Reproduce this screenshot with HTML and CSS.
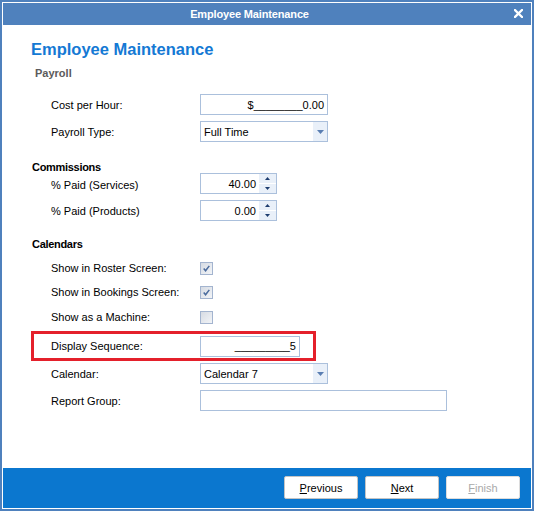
FILE: index.html
```html
<!DOCTYPE html>
<html>
<head>
<meta charset="utf-8">
<link rel="stylesheet" href="styles.css">
</head>
<body>
<div class="window">
  <div class="titlebar">
    <div class="title">Employee Maintenance</div>
    <div class="close">
      <svg viewBox="0 0 9 9"><path d="M1 1 L8 8 M8 1 L1 8" stroke="#fff" stroke-width="2.3" stroke-linecap="square"/></svg>
    </div>
  </div>
  <div class="content">
    <div class="h1">Employee Maintenance</div>
    <div class="subhead">Payroll</div>

    <div class="row m11">
      <div class="label">Cost per Hour:</div>
      <div class="field w128"><div class="value">$________0.00</div></div>
    </div>
    <div class="row m6">
      <div class="label">Payroll Type:</div>
      <div class="field w128">
        <div class="sel-text">Full Time</div>
        <div class="sel-btn"><svg viewBox="0 0 7 4" class="tri"><polygon points="0,0 7,0 3.5,4" fill="#5a7eb2"/></svg></div>
      </div>
    </div>

    <div class="section m19">Commissions</div>
    <div class="row">
      <div class="label low">% Paid (Services)</div>
      <div class="field w77">
        <div class="value">40.00</div>
        <div class="spin">
          <span class="up"><svg viewBox="0 0 5 3"><polygon points="2.5,0 5,3 0,3" fill="#1d3c6e"/></svg></span>
          <span class="down"><svg viewBox="0 0 5 3"><polygon points="0,0 5,0 2.5,3" fill="#1d3c6e"/></svg></span>
        </div>
      </div>
    </div>
    <div class="row m6">
      <div class="label">% Paid (Products)</div>
      <div class="field w77">
        <div class="value">0.00</div>
        <div class="spin">
          <span class="up"><svg viewBox="0 0 5 3"><polygon points="2.5,0 5,3 0,3" fill="#1d3c6e"/></svg></span>
          <span class="down"><svg viewBox="0 0 5 3"><polygon points="0,0 5,0 2.5,3" fill="#1d3c6e"/></svg></span>
        </div>
      </div>
    </div>

    <div class="section m17">Calendars</div>
    <div class="row crow m8">
      <div class="label">Show in Roster Screen:</div>
      <div class="check"><svg viewBox="0 0 13 13"><path d="M3.2 6.6 L5.4 9.2 L9.8 3.4" stroke="#4a6b9d" stroke-width="1.8" fill="none"/></svg></div>
    </div>
    <div class="row crow m4">
      <div class="label">Show in Bookings Screen:</div>
      <div class="check"><svg viewBox="0 0 13 13"><path d="M3.2 6.6 L5.4 9.2 L9.8 3.4" stroke="#4a6b9d" stroke-width="1.8" fill="none"/></svg></div>
    </div>
    <div class="row crow m5">
      <div class="label">Show as a Machine:</div>
      <div class="check"></div>
    </div>

    <div class="highlight m4">
      <div class="label">Display Sequence:</div>
      <div class="field w100"><div class="value">_________5</div></div>
    </div>

    <div class="row m2">
      <div class="label">Calendar:</div>
      <div class="field w128">
        <div class="sel-text">Calendar 7</div>
        <div class="sel-btn"><svg viewBox="0 0 7 4" class="tri"><polygon points="0,0 7,0 3.5,4" fill="#5a7eb2"/></svg></div>
      </div>
    </div>
    <div class="row m6">
      <div class="label">Report Group:</div>
      <div class="field w247"></div>
    </div>
  </div>
  <div class="footer">
    <button class="btn"><span><u>P</u>revious</span></button>
    <button class="btn"><span><u>N</u>ext</span></button>
    <button class="btn disabled"><span><u>F</u>inish</span></button>
  </div>
</div>
</body>
</html>
```

FILE: styles.css
```css
* { box-sizing: border-box; }
html, body { margin: 0; padding: 0; background: #fff; }
body {
  font-family: "Liberation Sans", Arial, sans-serif;
  font-size: 11px;
  color: #000;
}
.window {
  width: 534px;
  height: 511px;
  border: 2px solid #4f81bd;
  padding: 1px;
  display: flex;
  flex-direction: column;
  background: #fff;
}
.titlebar {
  height: 22px;
  flex: none;
  background: #4f81bd;
  display: flex;
  align-items: center;
  color: #fff;
}
.title {
  flex: 1;
  text-align: center;
  font-weight: bold;
  font-size: 11px;
  letter-spacing: -0.15px;
}
.close {
  width: 35px;
  display: flex;
  justify-content: flex-end;
  padding-right: 8px;
  margin-top: -1px;
}
.close svg { display: block; width: 9px; height: 9px; }

.content {
  flex: 1;
  display: flex;
  flex-direction: column;
}
.h1 {
  margin: 14px 0 0 28px;
  height: 20px;
  line-height: 20px;
  font-size: 16.5px;
  font-weight: bold;
  color: #1479d4;
}
.subhead {
  margin: 4px 0 0 32px;
  height: 20px;
  line-height: 20px;
  font-weight: bold;
  color: #5b5b5b;
}
.section {
  margin-left: 29px;
  height: 12px;
  line-height: 12px;
  font-weight: bold;
  letter-spacing: -0.3px;
}
.row {
  display: flex;
  align-items: center;
  padding-left: 48px;
  height: 21px;
}
.crow { height: 20px; }
.label { width: 149px; flex: none; white-space: nowrap; }
.label.low { padding-top: 3px; }

.m2 { margin-top: 2px; }
.m4 { margin-top: 4px; }
.m5 { margin-top: 5px; }
.m6 { margin-top: 6px; }
.m8 { margin-top: 8px; }
.m11 { margin-top: 11px; }
.m17 { margin-top: 17px; }
.m19 { margin-top: 19px; }

.field {
  height: 21px;
  border: 1px solid #abc0dc;
  background: #fff;
  display: flex;
  align-items: center;
  flex: none;
}
.w77 { width: 77px; }
.w100 { width: 100px; }
.w128 { width: 128px; }
.w247 { width: 247px; }
.value {
  flex: 1;
  text-align: right;
  padding-right: 3px;
  white-space: nowrap;
}
.sel-text { flex: 1; padding-left: 3px; white-space: nowrap; }
.sel-btn {
  width: 14px;
  align-self: stretch;
  background: #e9f0f9;
  display: flex;
  align-items: center;
  justify-content: center;
}
.tri { display: block; width: 7px; height: 4px; margin-top: 1px; }
.spin {
  width: 17px;
  align-self: stretch;
  background: #e9f0f9;
  display: flex;
  flex-direction: column;
}
.spin span {
  flex: 1;
  display: flex;
  align-items: center;
  justify-content: center;
}
.spin .up { border-bottom: 1px solid #fff; }
.spin svg { display: block; width: 5px; height: 3px; }

.check {
  width: 13px;
  height: 13px;
  border: 1px solid #a3b4cf;
  background: linear-gradient(135deg, #d6dbe3, #f2f4f7);
  display: flex;
  margin-top: 1px;
}
.check svg { display: block; width: 11px; height: 11px; }

.highlight {
  margin-left: 28px;
  width: 285px;
  height: 30px;
  border: 3px solid #e4202b;
  padding-left: 17px;
  display: flex;
  align-items: center;
}

.footer {
  height: 40px;
  flex: none;
  background: #0b77cf;
  display: flex;
  justify-content: flex-end;
  gap: 7px;
  padding: 8px 11px 0 0;
}
.btn {
  width: 74px;
  height: 23px;
  padding: 0;
  margin: 0;
  background: #fff;
  border: 1px solid #c4c4c4;
  border-radius: 2px;
  font-family: "Liberation Sans", Arial, sans-serif;
  font-size: 11px;
  color: #000;
  display: flex;
  align-items: center;
  justify-content: center;
}
.btn.disabled { color: #a9a9a9; border-color: #dcdcdc; }
```
